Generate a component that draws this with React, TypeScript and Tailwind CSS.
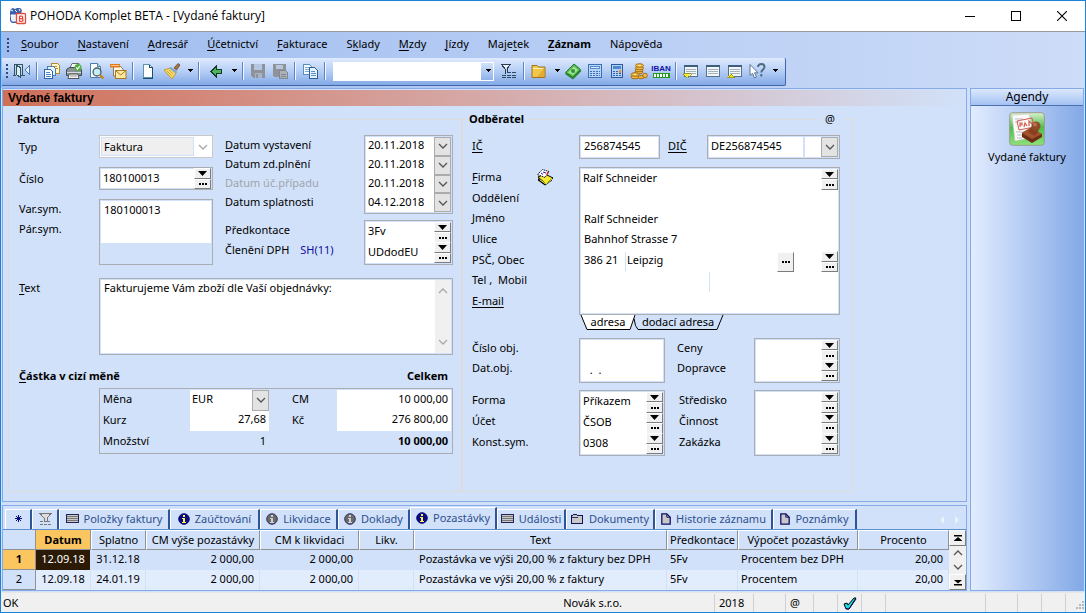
import React, { useState } from "react";

type IconProps = { children: React.ReactNode; crisp?: boolean };

function Ico({ children, crisp }: IconProps) {
  return (
    <svg width="18" height="18" viewBox="0 0 18 18" fill="none" shapeRendering={crisp ? "crispEdges" : "auto"} aria-hidden="true">
      {children}
    </svg>
  );
}

const DoorIcon = () => (
  <Ico crisp>
    <path d="M1 2.500H10M1.500 2v11M9.500 2v11M0 13.500h3M8 13.500h4" stroke="#33555f" />
    <path d="M3.500 3.500l4 2v10l-4-3z" fill="#d9f0f4" stroke="#33555f" />
    <path d="M12 8l4-4v8z" fill="#e4f2ff" />
    <path d="M12 8l4-4v8z" stroke="#4a78b5" />
  </Ico>
);
const CopiesIcon = () => (
  <Ico crisp>
    <path d="M8.500 1.500h6l2 2v8h-8z" fill="#fff8c8" stroke="#b58a2a" />
    <path d="M11 4h3M11 6h4" stroke="#c58f28" />
    <path d="M4.500 4.500h6l2 2v7h-8z" fill="#e4f3ff" stroke="#4a7fb8" />
    <path d="M1.500 7.500h6l2 2v7h-8z" fill="#fff" stroke="#2e68a8" />
    <path d="M3 10h4M3 12h5M3 14h5" stroke="#4b86c4" />
  </Ico>
);
const PrinterIcon = () => (
  <Ico>
    <path d="M5 6l2-4.500h7L12.500 6z" fill="#fff" stroke="#6c6c6c" />
    <path d="M1.500 7.500l3-2h10l2 2v6h-15z" fill="#8b9298" stroke="#43494e" />
    <path d="M2 10.500h14" stroke="#d8dde2" />
    <path d="M4 12h9l1 4.500H3z" fill="#f4f4f4" stroke="#555" />
    <path d="M5 14h7" stroke="#999" />
    <circle cx="13" cy="5.500" r="3.500" fill="#4fae3c" />
    <path d="M11.300 5.500l1.300 1.500 2.300-3" stroke="#fff" strokeWidth="1.200" />
  </Ico>
);
const PreviewIcon = () => (
  <Ico>
    <path d="M3.500 1.500h7l3 3v11h-10z" fill="#fff" stroke="#4a7fa8" />
    <path d="M10.500 1.500v3h3" fill="#bfe3ee" stroke="#4a7fa8" />
    <circle cx="10" cy="10" r="4" fill="#c4eef6" stroke="#4b5b66" strokeWidth="1.300" />
    <path d="M13 13l3.500 3.500" stroke="#c98520" strokeWidth="2.400" />
  </Ico>
);
const MailIcon = () => (
  <Ico>
    <path d="M4.500 3.500h6l3.500 3.500v7h-9.500z" fill="#fff8e8" stroke="#8a7a5a" />
    <path d="M1 2h10v3.500H1z" fill="#e07a20" />
    <path d="M2 3.500h8" stroke="#ffc27c" />
    <rect x="6.500" y="8.500" width="10.500" height="8" fill="#fbe9a0" stroke="#a87824" />
    <path d="M6.500 8.500l5.250 4.500L17 8.500" stroke="#a87824" />
  </Ico>
);
const PageIcon = () => (
  <Ico crisp>
    <path d="M4.500 2.500h6l3 3v10h-9z" fill="#fff" stroke="#5c93ae" />
    <path d="M10.500 2.500v3h3M13.500 6v10M4 16h10" stroke="#1c4f6e" />
  </Ico>
);
const BrushIcon = () => (
  <Ico>
    <path d="M11 6l4-4.500 2 1.500-3.500 5z" fill="#a8764c" stroke="#6b4526" strokeWidth=".8" />
    <path d="M1 8l7-2 5.500 4-4.500 7z" fill="#f7dc6a" stroke="#c19a2b" />
    <path d="M8 5l6 4.500-1.500 2-6.500-5.500z" fill="#87a7c8" />
    <path d="M4 9l5 5M6 8l4 4" stroke="#d5a832" />
  </Ico>
);
const BackIcon = () => (
  <Ico crisp>
    <path d="M4 9.500l5-5v3h5v4H9v3z" fill="#4fb35c" stroke="#123f2a" />
  </Ico>
);
const SaveIcon = () => (
  <Ico crisp>
    <path d="M2 2h14v14H4l-2-2z" fill="#8f9398" />
    <path d="M5 2h8v6H5z" fill="#b5c6e2" />
    <path d="M6 11h7v5H6z" fill="#a7b4c8" />
    <path d="M7 12h2v4H7z" fill="#8f9398" />
  </Ico>
);
const SaveAllIcon = () => (
  <Ico crisp>
    <path d="M2 2h13v13H3l-1-1z" fill="#8f9398" />
    <path d="M5 3h7v4H5z" fill="#b5c6e2" />
    <path d="M8.500 8.500h6l2 2v6h-8z" fill="#a9b1bb" stroke="#84888d" />
    <path d="M10 12h5M10 14h5" stroke="#84888d" />
  </Ico>
);
const DuplicateIcon = () => (
  <Ico crisp>
    <path d="M2.500 2.500h6l2 2v8h-8z" fill="#f5faff" stroke="#5790b8" />
    <path d="M4 5h4M4 7h5M4 9h5" stroke="#7aa8cf" />
    <path d="M8.500 5.500h5l3 3v8h-8z" fill="#e8f3ff" stroke="#2c5f94" />
    <path d="M10 9h4M10 11h5M10 13h5" stroke="#5a8fc8" />
  </Ico>
);
const FilterIcon = () => (
  <Ico crisp>
    <path d="M1 2.500h10M2 3l3 4v5M10 3L7 7v4" stroke="#2b3d4c" />
    <path d="M3 3h6L6 7z" fill="#eef" />
    <path d="M7 10.500h4M12 10.500h4M2 13.500h4M7 13.500h4M12 13.500h4M7 15.500h4M2 15.500h4M12 15.500h4" stroke="#2b4a60" />
  </Ico>
);
const FolderIcon = () => (
  <Ico>
    <path d="M2 3.500h5l1.500 1.500H15v10.500H2z" fill="#f2c64a" stroke="#a0701c" />
    <path d="M14.500 5.500L7 15h7.500z" fill="#d89a22" opacity=".6" />
    <path d="M3 6.500h10" stroke="#fff1b2" />
  </Ico>
);
const CashIcon = () => (
  <Ico>
    <path d="M1 12l9-9 7.500 6L9 17.500z" fill="#2c8230" />
    <path d="M1.500 10.500L10 2l6.500 5.500L9 15.500z" fill="#56bb50" stroke="#217a28" />
    <path d="M4 10.500L10 4.500l4 3.500L9 13z" fill="#a5e39b" />
    <circle cx="9" cy="9" r="2" fill="#2f9334" />
  </Ico>
);
const CalcWideIcon = () => (
  <Ico crisp>
    <rect x="2.500" y="2.500" width="13" height="13" fill="#b8d5f8" stroke="#3e6fb0" />
    <rect x="4.500" y="4.500" width="9" height="2" fill="#d4e6fc" stroke="#5a8bd0" />
    <path d="M4 9.500h10M4 11.500h10M4 13.500h10" stroke="#3970bc" strokeDasharray="2 1" />
  </Ico>
);
const CalcIcon = () => (
  <Ico crisp>
    <rect x="3.500" y="2.500" width="11" height="13" fill="#b5d2f6" stroke="#2c5a9a" />
    <path d="M5 4h8v3H5z" fill="#4e87d2" />
    <path d="M5 9.500h5M5 11.500h8M5 13.500h8" stroke="#2c65b0" strokeDasharray="2 1" />
    <path d="M11 8h2v3h-2z" fill="#f08a24" />
  </Ico>
);
const CoinsIcon = () => (
  <Ico>
    <g fill="#f4bb3d" stroke="#9c6412" strokeWidth=".9">
      <ellipse cx="9" cy="10" rx="4" ry="1.800" />
      <ellipse cx="9" cy="8" rx="4" ry="1.800" />
      <ellipse cx="9.500" cy="6" rx="4" ry="1.800" />
      <ellipse cx="9.500" cy="3.500" rx="4" ry="1.800" />
      <ellipse cx="5" cy="15" rx="4" ry="1.800" />
      <ellipse cx="5" cy="12.500" rx="4" ry="1.800" />
      <ellipse cx="11" cy="15.200" rx="3" ry="1.600" />
      <circle cx="15" cy="13.500" r="2.300" />
    </g>
    <path d="M8 3.500h3M4 12.500h2" stroke="#fff0a8" />
  </Ico>
);
const GridPlaceIcon = ({ arrow }: { arrow?: "down" | "up" }) => (
  <Ico crisp>
    <rect x="2.500" y="3.500" width="13" height="11" fill="#f3f6f8" stroke="#54728c" />
    <path d="M2 4h14" stroke="#3d5f7c" strokeWidth="2" />
    <path d="M4 7.500h10M4 9.500h10M4 11.500h10" stroke="#a5b1ba" />
    {arrow === "down" && <path d="M1 11.500h8l-4 4z" fill="#f6f02c" stroke="#8d8a16" strokeWidth=".8" />}
    {arrow === "up" && <path d="M1 15.500h8l-4-4z" fill="#f6f02c" stroke="#8d8a16" strokeWidth=".8" />}
  </Ico>
);
const HelpIcon = () => (
  <Ico>
    <path d="M2 2.500v11l2.500-2.200L6.500 16l2-1-2-4.200H10z" fill="#fff" stroke="#5a7890" />
    <path d="M10 5c0-4 6.500-4 6.500 0 0 2.500-3.200 2.500-3.200 5.500M13.300 12v2.500" stroke="#4a6a80" strokeWidth="1.900" />
  </Ico>
);

const Drop = () => (
  <svg width="7" height="4" viewBox="0 0 7 4" shapeRendering="crispEdges" aria-hidden="true">
    <path d="M1 0h6L4 3z" fill="#000" />
  </svg>
);
const Chevron = ({ up, tone = "dark" }: { up?: boolean; tone?: "dark" | "light" }) => (
  <svg width="10" height="6" viewBox="0 0 10 6" fill="none" className={up ? "rotate-180" : ""} aria-hidden="true">
    <path d="M1 1l4 4 4-4" stroke={tone === "dark" ? "#555" : "#a8a8a8"} strokeWidth="1.300" />
  </svg>
);

/** Renders a caption; the character after "&" is underlined as the access key. */
function Cap({ t }: { t: string }) {
  const i = t.indexOf("&");
  if (i < 0) return <>{t}</>;
  return (
    <span className="whitespace-pre">
      {t.slice(0, i)}
      <u className="underline-offset-2">{t[i + 1]}</u>
      {t.slice(i + 2)}
    </span>
  );
}

function Sep() {
  return (
    <div className="flex w-2 shrink-0 justify-center">
      <div className="h-[18px] w-[2px] border-l border-[#5f84c4] bg-[#f2f7ff]" />
    </div>
  );
}

function Tool({ name, children }: { name: string; children: React.ReactNode }) {
  return (
    <button aria-label={name} title={name} className="flex h-[22px] w-[22px] shrink-0 items-center justify-center">
      {children}
    </button>
  );
}

function ToolDrop({ name }: { name: string }) {
  return (
    <button aria-label={name} className="flex h-[22px] w-3 shrink-0 items-center justify-center">
      <Drop />
    </button>
  );
}

function Grip() {
  return (
    <div className="flex w-[3px] shrink-0 flex-col justify-center gap-[2px]">
      {[0, 1, 2, 3].map((i) => (
        <span key={i} className="h-[2px] w-[2px] bg-[#2c4a80]" />
      ))}
    </div>
  );
}

const bevel =
  "flex items-center justify-center border border-t-white border-l-white border-r-[#7c7c7c] border-b-[#7c7c7c] bg-[#f0f0f0] min-h-0";

function Lookup({ name }: { name: string }) {
  return (
    <div className="flex h-[21px] w-[17px] shrink-0 flex-col">
      <button aria-label={`${name}: seznam`} className={`${bevel} flex-1`}>
        <svg width="9" height="5" viewBox="0 0 9 5" aria-hidden="true">
          <path d="M0 0h9L4.500 5z" fill="#000" />
        </svg>
      </button>
      <button aria-label={`${name}: výběr`} className={`${bevel} flex-1`}>
        <Dots />
      </button>
    </div>
  );
}

function Dots() {
  return (
    <svg width="8" height="2" viewBox="0 0 8 2" shapeRendering="crispEdges" aria-hidden="true">
      <path d="M0 0h2v2H0zM3 0h2v2H3zM6 0h2v2H6z" fill="#000" />
    </svg>
  );
}

function ChevronButton({ name }: { name: string }) {
  return (
    <button aria-label={name} className="flex w-[17px] shrink-0 items-center justify-center self-stretch border border-[#acacac] bg-[#e3e3e3]">
      <Chevron />
    </button>
  );
}

const box = "flex shrink-0 border border-[#abadb3] bg-[#d1e1f9] p-px";
const input = "w-0 min-w-0 flex-1 bg-transparent pb-[2px] outline-none";
const line = "min-w-0 pb-[3px] outline-none";
const amount = "w-full min-w-0 bg-white pr-[3px] pb-[3px] text-right outline-none";

function LookupRow({ id, name, value }: { id: string; name: string; value: string }) {
  return (
    <div className="flex min-h-0 min-w-0 flex-1 items-center bg-white pl-[2px]">
      <input id={id} defaultValue={value} className={input} />
      <Lookup name={name} />
    </div>
  );
}

const dates = [
  { id: "d1", label: "&Datum vystavení", value: "20.11.2018" },
  { id: "d2", label: "Datum zd.plnění", value: "20.11.2018" },
  { id: "d3", label: "Datum úč.případu", value: "20.11.2018", dim: true },
  { id: "d4", label: "Datum splatnosti", value: "04.12.2018" },
];

function Faktura() {
  return (
    <fieldset className="w-[454px] min-w-0 shrink-0 border border-[#dcdcdc] px-2 pl-[10px]">
      <legend className="-ml-[6px] px-1 leading-4 font-bold">Faktura</legend>
      <div className="flex pt-2">
        <div className="flex w-[194px] flex-col gap-[9px]">
          <div className="flex h-[23px] items-center">
            <label htmlFor="typ" className="w-20 shrink-0">Typ</label>
            <div className="relative flex h-full flex-1 border border-[#c8c8cc] bg-white p-px">
              <select id="typ" disabled className="mr-[17px] flex-1 appearance-none border border-[#d1e1f9] bg-[#efefef] pl-[2px] opacity-100">
                <option>Faktura</option>
              </select>
              <span className="pointer-events-none absolute top-2 right-1"><Chevron tone="light" /></span>
            </div>
          </div>
          <div className="flex h-[23px] items-center">
            <label htmlFor="cislo" className="w-20 shrink-0">Číslo</label>
            <div className={`${box} h-full w-[114px]`}>
              <LookupRow id="cislo" name="Číslo" value="180100013" />
            </div>
          </div>
          <div className="flex h-[66px]">
            <div className="flex w-20 shrink-0 flex-col">
              <label htmlFor="varsym" className="h-5 leading-5">Var.sym.</label>
              <label htmlFor="parsym" className="h-5 leading-5">Pár.sym.</label>
            </div>
            <div className={`${box} w-[114px] flex-col`}>
              <div className="flex h-[42px] flex-col bg-white pl-[3px]">
                <input id="varsym" defaultValue="180100013" className={`${line} h-5 w-full`} />
                <input id="parsym" className={`${line} h-[22px] w-full`} />
              </div>
            </div>
          </div>
        </div>
        <div className="ml-3 flex flex-1 flex-col gap-[6px]">
          <div className="flex h-[79px]">
            <div className="flex flex-1 flex-col">
              {dates.map((d) => (
                <label key={d.id} htmlFor={d.id} className={`h-[19px] leading-[19px] ${d.dim ? "text-[#a0a4ac]" : ""}`}>
                  <Cap t={d.label} />
                </label>
              ))}
            </div>
            <div className={`${box} w-[89px] flex-col`}>
              {dates.map((d) => (
                <div key={d.id} className="flex min-h-0 flex-1 items-center bg-white pl-[2px]">
                  <input id={d.id} defaultValue={d.value} className={input} />
                  <ChevronButton name={`${d.value} kalendář`} />
                </div>
              ))}
            </div>
          </div>
          <div className="flex h-[45px]">
            <div className="flex flex-1 flex-col">
              <label htmlFor="predk" className="h-5 leading-5">Předkontace</label>
              <label htmlFor="clen" className="h-5 leading-5">Členění DPH <span className="ml-2 text-[#1010a0]">SH(11)</span></label>
            </div>
            <div className={`${box} w-[89px] flex-col`}>
              <LookupRow id="predk" name="Předkontace" value="3Fv" />
              <LookupRow id="clen" name="Členění DPH" value="UDdodEU" />
            </div>
          </div>
        </div>
      </div>
      <div className="mt-[13px] flex h-[77px]">
        <label htmlFor="text" className="w-20 shrink-0 leading-5"><Cap t="&Text" /></label>
        <div className={`${box} w-[354px]`}>
          <textarea id="text" defaultValue="Fakturujeme Vám zboží dle Vaší objednávky:" className="flex-1 resize-none overflow-hidden bg-white pl-[3px] leading-4 outline-none" />
          <div className="flex w-4 flex-col items-center justify-between bg-[#f0f0f0] py-2">
            <Chevron up tone="light" />
            <Chevron tone="light" />
          </div>
        </div>
      </div>
      <div className="mt-[13px] flex justify-between pr-[5px] leading-4 font-bold">
        <span><Cap t="&Částka v cizí měně" /></span>
        <span>Celkem</span>
      </div>
      <div className="mt-1 ml-20 grid h-[66px] grid-cols-[89px_79px_68px_1fr] grid-rows-3 items-stretch border border-[#abadb3] p-px">
        <label htmlFor="mena" className="self-center pb-[2px] pl-[2px]">Měna</label>
        <div className="relative flex bg-white">
          <select id="mena" className="flex-1 appearance-none bg-white pb-[2px] pl-[2px] outline-none"><option>EUR</option></select>
          <span className="pointer-events-none absolute top-0 right-0 flex h-full w-[17px] items-center justify-center border border-[#acacac] bg-[#e3e3e3]"><Chevron /></span>
        </div>
        <label htmlFor="cm" className="self-center pb-[2px] pl-[23px]">CM</label>
        <input id="cm" defaultValue="10 000,00" className={amount} />
        <label htmlFor="kurz" className="self-center pb-[2px] pl-[2px]">Kurz</label>
        <input id="kurz" defaultValue="27,68" className={amount} />
        <label htmlFor="kc" className="self-center pb-[2px] pl-[23px]">Kč</label>
        <input id="kc" defaultValue="276 800,00" className={amount} />
        <span className="self-center pb-[2px] pl-[2px]">Množství</span>
        <span className="self-center pr-[3px] pb-[2px] text-right">1</span>
        <span />
        <span className="self-center pr-[3px] pb-[2px] text-right font-bold">10 000,00</span>
      </div>
    </fieldset>
  );
}

function AddressTab({ label, active, onClick, wide }: { label: string; active: boolean; onClick: () => void; wide?: boolean }) {
  return (
    <button onClick={onClick} className={`relative flex h-[15px] justify-center ${wide ? "-ml-1 w-[92px]" : "w-[56px]"}`}>
      <svg className="absolute inset-0 h-full w-full" viewBox={wide ? "0 0 92 15" : "0 0 56 15"} fill={active ? "#fff" : "#d1e1f9"} aria-hidden="true">
        <path d={wide ? "M2 3.500L3.500 10.500 6 14.500H85L91 0" : "M1 0L7 14.500H50L55 0"} stroke="#000" />
      </svg>
      <span className="relative leading-[13px]">{label}</span>
    </button>
  );
}

function Odberatel() {
  const [tab, setTab] = useState(0);
  return (
    <fieldset className="relative w-[391px] min-w-0 shrink-0 border border-[#dcdcdc] pr-3 pl-[9px]">
      <legend className="-ml-[6px] px-[3px] leading-4 font-bold">Odběratel</legend>
      <button aria-label="E-mail odběratele" className="absolute -top-4 right-[9px] bg-[#d1e1f9] px-2 leading-4">@</button>
      <div className="flex h-8 items-center pt-2">
        <a href="#ic" className="w-[107px] pb-[2px] underline underline-offset-2">IČ</a>
        <div className={`${box} h-6 w-[81px]`}>
          <input aria-label="IČ" defaultValue="256874545" className={`${line} w-full bg-white pl-[3px]`} />
        </div>
        <a href="#dic" className="ml-2 w-[39px] pb-[2px] underline underline-offset-2">DIČ</a>
        <div className={`${box} h-6 w-[133px]`}>
          <input aria-label="DIČ" defaultValue="DE256874545" className={`${line} mr-[2px] w-[94px] bg-white pl-[2px]`} />
          <div className="flex-1 bg-white" />
          <ChevronButton name="DIČ seznam" />
        </div>
      </div>
      <div className="mt-2 flex">
        <div className="grid h-36 w-[107px] grid-rows-7 items-center">
          <div className="flex items-center justify-between pr-[25px]">
            <label htmlFor="firma"><Cap t="&Firma" /></label>
            <svg width="18" height="18" viewBox="0 0 18 18" aria-hidden="true">
              <path d="M2 10l7 6 7-6v2.500l-7 5-7-5z" fill="#000" />
              <path d="M2 9l7-3 8 4-7 6z" fill="#f4ea30" stroke="#000" />
              <path d="M4 12l6 4 6-5" fill="none" stroke="#f4ea30" />
              <path d="M1.500 6.500l5-5 6.500 2-4 6z" fill="#fff" stroke="#222" strokeDasharray="1.500 .6" />
              <path d="M5 5l2 1.500M7 4l3 1" stroke="#1818c8" />
              <path d="M12 4l-1 2.500" stroke="#e02020" strokeWidth="1.500" />
            </svg>
          </div>
          <label htmlFor="odd">Oddělení</label>
          <label htmlFor="jmeno">Jméno</label>
          <label htmlFor="ulice">Ulice</label>
          <label htmlFor="psc">PSČ, Obec</label>
          <label htmlFor="tel">Tel , &nbsp;Mobil</label>
          <a href="#email" className="underline underline-offset-2">E-mail</a>
        </div>
        <div className={`${box} h-[148px] w-[261px]`}>
          <div className="grid min-w-0 flex-1 grid-cols-1 grid-rows-7 bg-white">
            <div className="flex items-center pl-[2px]">
              <input id="firma" defaultValue="Ralf Schneider" className={input} />
              <Lookup name="Firma" />
            </div>
            <input id="odd" className={`${line} pl-[3px]`} />
            <input id="jmeno" defaultValue="Ralf Schneider" className={`${line} pl-[3px]`} />
            <input id="ulice" defaultValue="Bahnhof Strasse 7" className={`${line} pl-[3px]`} />
            <div className="flex items-center">
              <input id="psc" defaultValue="386 21" className={`${line} w-[45px] border-r border-[#d1e1f9] pl-[3px]`} />
              <input aria-label="Obec" defaultValue="Leipzig" className={`${line} flex-1 pl-px`} />
              <button aria-label="Vybrat obec" className={`${bevel} mr-[27px] h-5 w-[17px] shrink-0`}><Dots /></button>
              <Lookup name="Obec" />
            </div>
            <div className="flex">
              <input id="tel" className={`${line} w-[129px] border-r border-[#d1e1f9]`} />
              <input aria-label="Mobil" className={`${line} flex-1`} />
            </div>
            <input aria-label="E-mail" className={line} />
          </div>
        </div>
      </div>
      <div className="ml-[108px] flex">
        <AddressTab label="adresa" active={tab === 0} onClick={() => setTab(0)} />
        <AddressTab label="dodací adresa" active={tab === 1} onClick={() => setTab(1)} wide />
      </div>
      <div className="mt-2 flex h-[45px]">
        <div className="flex w-[107px] flex-col">
          <label htmlFor="cobj" className="h-5 leading-5">Číslo obj.</label>
          <label htmlFor="dobj" className="h-5 leading-5">Dat.obj.</label>
        </div>
        <div className={`${box} w-[86px] flex-col`}>
          <input id="cobj" className="h-5 w-full bg-white outline-none" />
          <input id="dobj" defaultValue="  .  ." className={`${line} h-[21px] w-full bg-white pl-[3px]`} />
        </div>
        <div className="ml-3 flex w-[77px] flex-col">
          <label htmlFor="ceny" className="h-5 leading-5">Ceny</label>
          <label htmlFor="dopr" className="h-5 leading-5">Dopravce</label>
        </div>
        <div className={`${box} w-[86px] flex-col`}>
          <LookupRow id="ceny" name="Ceny" value="" />
          <LookupRow id="dopr" name="Dopravce" value="" />
        </div>
      </div>
      <div className="mt-[7px] flex h-[66px]">
        <div className="grid h-[62px] w-[107px] grid-rows-3 items-center">
          <label htmlFor="forma">Forma</label>
          <label htmlFor="ucet">Účet</label>
          <label htmlFor="ks">Konst.sym.</label>
        </div>
        <div className={`${box} w-[86px] flex-col`}>
          <LookupRow id="forma" name="Forma" value="Příkazem" />
          <LookupRow id="ucet" name="Účet" value="ČSOB" />
          <LookupRow id="ks" name="Konst.sym." value="0308" />
        </div>
        <div className="ml-[14px] grid h-[62px] w-[75px] grid-rows-3 items-center">
          <label htmlFor="stred">Středisko</label>
          <label htmlFor="cinn">Činnost</label>
          <label htmlFor="zak">Zakázka</label>
        </div>
        <div className={`${box} w-[86px] flex-col`}>
          <LookupRow id="stred" name="Středisko" value="" />
          <LookupRow id="cinn" name="Činnost" value="" />
          <LookupRow id="zak" name="Zakázka" value="" />
        </div>
      </div>
    </fieldset>
  );
}

const Lines = () => (
  <svg width="13" height="11" viewBox="0 0 13 11" shapeRendering="crispEdges" aria-hidden="true">
    <path d="M.5 1.500h12v8H.5z" fill="#c8c8c8" stroke="#222255" />
    <path d="M1 3.500h11M1 5.500h11M1 7.500h11" stroke="#777" />
  </svg>
);
const Info = ({ on }: { on?: boolean }) => (
  <svg width="12" height="12" viewBox="0 0 12 12" aria-hidden="true">
    <circle cx="6" cy="6" r="5.300" fill={on ? "#0a0a82" : "#6a6a6a"} stroke={on ? "#0a0a82" : "#33336a"} />
    <path d="M5 2h2v2H5zM4 5h3v4h1v1H4V9h1V6H4z" fill={on ? "#fff34a" : "#d0d0d0"} />
  </svg>
);
const Dir = () => (
  <svg width="13" height="12" viewBox="0 0 13 12" shapeRendering="crispEdges" aria-hidden="true">
    <path d="M.5 10.500v-8h1l1-1h3l1 1h5v8z" fill="#c8c8c8" stroke="#111155" />
    <path d="M1 4.500h6" stroke="#333366" />
  </svg>
);
const Doc = () => (
  <svg width="10" height="12" viewBox="0 0 10 12" aria-hidden="true">
    <path d="M.8.8h5l3.400 3.400v7H.8z" fill="#c8c8c8" stroke="#11116a" strokeWidth="1.300" />
    <path d="M5.800.8v3.400h3.400" fill="none" stroke="#11116a" />
  </svg>
);

const tabs: { label: string; icon: React.ReactNode; w: string; name?: string }[] = [
  { label: "", name: "Vše", w: "w-[27px]", icon: <svg width="9" height="9" viewBox="0 0 9 9" aria-hidden="true"><path d="M4.500 1v7M1 4.500h7M2 2l5 5M7 2L2 7" stroke="#0a0a82" /></svg> },
  { label: "", name: "Filtr", w: "w-[27px]", icon: <svg width="13" height="13" viewBox="0 0 13 13" shapeRendering="crispEdges" fill="none" aria-hidden="true"><path d="M1 1.500h11L8 6v3H5V6z" fill="#ddd" stroke="#777" /><path d="M1 9.500h4M8 9.500h4M1 12h11" stroke="#777" strokeDasharray="3 1" /></svg> },
  { label: "Položky faktury", w: "w-[111px]", icon: <Lines /> },
  { label: "Zaúčtování", w: "w-[90px]", icon: <Info on /> },
  { label: "Likvidace", w: "w-[78px]", icon: <Info /> },
  { label: "Doklady", w: "w-[72px]", icon: <Info /> },
  { label: "Pozastávky", w: "w-[87px]", icon: <Info on /> },
  { label: "Události", w: "w-[69px]", icon: <Lines /> },
  { label: "Dokumenty", w: "w-[89px]", icon: <Dir /> },
  { label: "Historie záznamu", w: "w-[118px]", icon: <Doc /> },
  { label: "Poznámky", w: "w-[84px]", icon: <Doc /> },
];

const cols: { t: string; w: string }[] = [
  { t: "Datum", w: "w-[55px]" },
  { t: "Splatno", w: "w-[55px]" },
  { t: "CM výše pozastávky", w: "w-[114px]" },
  { t: "CM k likvidaci", w: "w-[99px]" },
  { t: "Likv.", w: "w-[55px]" },
  { t: "Text", w: "" },
  { t: "Předkontace", w: "w-[71px]" },
  { t: "Výpočet pozastávky", w: "w-[120px]" },
  { t: "Procento", w: "w-[91px]" },
];
const rows = [
  ["12.09.18", "31.12.18", "2 000,00", "2 000,00", "", "Pozastávka ve výši 20,00 % z faktury bez DPH", "5Fv", "Procentem bez DPH", "20,00"],
  ["12.09.18", "24.01.19", "2 000,00", "2 000,00", "", "Pozastávka ve výši 20,00 % z faktury", "5Fv", "Procentem", "20,00"],
];
const alignRight = [2, 3, 8];

function Detail() {
  const [active, setActive] = useState(6);
  return (
    <section className="mt-[3px] border border-[#86aae8] bg-[#d1e1f9]">
      <div className="flex h-6 items-end border-b border-[#5b8fcf] pl-[2px]">
        {tabs.map((t, i) => (
          <button
            key={i}
            aria-label={t.name}
            onClick={() => setActive(i)}
            className={`flex shrink-0 items-center justify-center gap-[5px] border-t border-r-2 border-l border-t-white border-r-[#2e5597] border-l-white pb-[2px] text-[#2f4f8f] ${t.w} ${i === active ? "h-[22px]" : "h-5"}`}
          >
            {t.icon}
            {t.label}
          </button>
        ))}
        <div className="flex-1" />
        <svg width="21" height="18" viewBox="0 0 21 18" className="mr-[6px]" aria-hidden="true">
          <path d="M5 5v8L1 9zM16 5v8l4-4z" fill="#eaf1fc" />
        </svg>
      </div>
      <div className="flex h-[60px]">
        <div className="min-w-0 flex-1">
          <table className="w-full table-fixed border-separate border-spacing-0">
            <thead>
              <tr className="h-5">
                <th aria-label="Řádek" className="w-[33px] border-r border-b border-[#8e9196] p-0" />
                {cols.map((c, i) => (
                  <th key={c.t} className={`border-r border-b border-[#8e9196] p-0 whitespace-nowrap ${c.w} ${i === 0 ? "bg-[#fbc55f] font-bold" : "border-t border-l border-t-white border-l-white font-normal"}`}>
                    {c.t}
                  </th>
                ))}
              </tr>
            </thead>
            <tbody>
              {rows.map((r, n) => (
                <tr key={n} className={`h-5 ${n ? "bg-[#e1ecfd]" : "bg-[#d1e1f9]"}`}>
                  <th className={`border-r border-b border-[#8e9196] p-0 pb-px ${n ? "bg-[#d1e1f9] font-normal" : "bg-[#fbc55f] font-bold"}`}>{n + 1}</th>
                  {r.map((v, i) => (
                    <td
                      key={i}
                      className={`overflow-hidden border-r border-[#d1e1f9] p-0 pb-[2px] whitespace-nowrap ${alignRight.includes(i) ? "pr-[5px] text-right" : i < 2 ? "text-center" : i === 5 ? "pl-[5px]" : "pl-[3px]"} ${n === 0 && i === 0 ? "bg-[#2b1a05] text-white" : ""}`}
                    >
                      {v}
                    </td>
                  ))}
                </tr>
              ))}
            </tbody>
          </table>
        </div>
        <div className="flex w-[17px] shrink-0 flex-col bg-[#f0f0f0]">
          <button aria-label="První" className={`${bevel} h-4 shrink-0`}>
            <svg width="8" height="7" viewBox="0 0 8 7" aria-hidden="true"><path d="M0 0h8v1.500H0zM4 2l4 3.500H0zM0 5.500h8V6H0z" /></svg>
          </button>
          <button aria-label="Nahoru" className="flex flex-1 items-center justify-center"><Chevron up /></button>
          <button aria-label="Dolů" className="flex flex-1 items-center justify-center"><Chevron /></button>
          <button aria-label="Poslední" className={`${bevel} h-4 shrink-0`}>
            <svg width="8" height="7" viewBox="0 0 8 7" aria-hidden="true"><path d="M0 5h8v1.500H0zM4 4.500L8 1H0z" /></svg>
          </button>
        </div>
      </div>
    </section>
  );
}

const menu = ["&Soubor", "&Nastavení", "&Adresář", "&Účetnictví", "&Fakturace", "S&klady", "&Mzdy", "&Jízdy", "Maje&tek", "&Záznam", "Náp&ověda"];

function StatusCell({ w, children }: { w: string; children?: React.ReactNode }) {
  return <div className={`flex h-full shrink-0 items-center border-l border-[#d0d0d0] ${w}`}>{children}</div>;
}

export default function App() {
  return (
    <div className="flex min-h-screen flex-col border border-[#1883d7] bg-[#d1e1f9] font-['Noto_Sans','Open_Sans',sans-serif] text-[11px] leading-4 text-black">
      <header className="flex h-[31px] items-center border-b border-[#999] bg-white pl-2">
        <svg width="18" height="18" viewBox="0 0 18 18" aria-hidden="true">
          <path d="M1 5l1-3 2-1 2 1 2-1h3l2 2-1 4-2 1v7l-1 1H3l-2-2z" fill="#3c5fae" />
          <path d="M2 3l2 1M6 3l2 2M10 2l1 2M2 8h6v6H3z" stroke="#fff" fill="#e9effb" />
          <rect x="7.500" y="6.500" width="9" height="10" rx="1" fill="#fff" stroke="#e04a3c" strokeWidth="1.300" />
          <path d="M10.500 9v5.500M10.500 9.200h2q1.200 0 1.200 1.200t-1.200 1.300h-2h2.300q1.300.1 1.300 1.400t-1.300 1.300h-2.300" fill="none" stroke="#e04a3c" strokeWidth="1.300" />
        </svg>
        <h1 className="ml-[3px] flex-1 font-['Open_Sans','Noto_Sans',sans-serif] text-[12px]">POHODA Komplet BETA - [Vydané faktury]</h1>
        <button aria-label="Minimalizovat" className="flex h-full w-[46px] items-center justify-center">
          <svg width="10" height="10" viewBox="0 0 10 10" shapeRendering="crispEdges"><path d="M0 5.500h10" stroke="#000" /></svg>
        </button>
        <button aria-label="Maximalizovat" className="flex h-full w-[46px] items-center justify-center">
          <svg width="10" height="10" viewBox="0 0 10 10" shapeRendering="crispEdges" fill="none"><path d="M.5.5h9v9h-9z" stroke="#000" /></svg>
        </button>
        <button aria-label="Zavřít" className="flex h-full w-[46px] items-center justify-center">
          <svg width="10" height="10" viewBox="0 0 10 10" fill="none"><path d="M0 0l10 10M10 0L0 10" stroke="#000" strokeWidth="1.100" /></svg>
        </button>
      </header>
      <div className="bg-linear-to-r from-[#9ebcef] to-[#cddcf8]">
        <nav className="flex h-[26px] items-center pl-[6px]">
          <Grip />
          <ul className="ml-[2px] flex gap-px pb-[2px]">
            {menu.map((m) => (
              <li key={m} className={m === "&Záznam" ? "font-bold" : ""}>
                <button className="px-[9px]"><Cap t={m} /></button>
              </li>
            ))}
          </ul>
        </nav>
        <div className="mb-[2px] ml-px flex h-7 w-[784px] items-center rounded-r-xs border-r border-b border-[#3e66a8] bg-linear-to-b from-[#dfeafd] via-[#b4cdf5] to-[#83a9e6] pb-px pl-1">
          <Grip />
          <div className="w-[2px]" />
          <Tool name="Konec"><DoorIcon /></Tool>
          <Sep />
          <Tool name="Agendy"><CopiesIcon /></Tool>
          <Tool name="Tisk"><PrinterIcon /></Tool>
          <Tool name="Náhled"><PreviewIcon /></Tool>
          <Tool name="Odeslat"><MailIcon /></Tool>
          <Sep />
          <Tool name="Nový"><PageIcon /></Tool>
          <div className="w-[2px]" />
          <Tool name="Průvodce"><BrushIcon /></Tool>
          <ToolDrop name="Průvodce nabídka" />
          <Sep />
          <div className="w-[2px]" />
          <Tool name="Zpět"><BackIcon /></Tool>
          <ToolDrop name="Zpět nabídka" />
          <Sep />
          <Tool name="Uložit"><SaveIcon /></Tool>
          <Tool name="Uložit kopii"><SaveAllIcon /></Tool>
          <Sep />
          <Tool name="Kopírovat"><DuplicateIcon /></Tool>
          <Sep />
          <div className="ml-1 flex h-[19px] w-[161px] border border-white bg-white">
            <input aria-label="Hledat" className="min-w-0 flex-1 outline-none" />
            <button aria-label="Historie hledání" className="flex w-3 items-center justify-center bg-linear-to-b from-[#d3e2fa] to-[#8fb2ea]"><Drop /></button>
          </div>
          <div className="w-1" />
          <Tool name="Filtr"><FilterIcon /></Tool>
          <Sep />
          <Tool name="Složka"><FolderIcon /></Tool>
          <ToolDrop name="Složka nabídka" />
          <Tool name="Hotovost"><CashIcon /></Tool>
          <Tool name="Kalkulačka"><CalcWideIcon /></Tool>
          <Tool name="Výpočet"><CalcIcon /></Tool>
          <Tool name="Měny"><CoinsIcon /></Tool>
          <button aria-label="IBAN" className="flex w-[22px] shrink-0 flex-col items-center">
            <span className="font-['Liberation_Sans_Narrow','Liberation_Sans',sans-serif] text-[8px] leading-[9px] font-bold text-[#1414a8]">IBAN</span>
            <svg width="17" height="5" viewBox="0 0 17 5" shapeRendering="crispEdges" aria-hidden="true">
              <path d="M0 0h17v5H0z" fill="#1e9a1e" />
              <path d="M1 2.500h15" stroke="#fff" strokeWidth="3" strokeDasharray="2 1" />
            </svg>
          </button>
          <Sep />
          <Tool name="Tabulka dole"><GridPlaceIcon arrow="down" /></Tool>
          <Tool name="Tabulka"><GridPlaceIcon /></Tool>
          <Tool name="Tabulka nahoře"><GridPlaceIcon arrow="up" /></Tool>
          <Tool name="Nápověda"><HelpIcon /></Tool>
          <ToolDrop name="Nápověda nabídka" />
        </div>
      </div>
      <main className="flex flex-1 gap-[3px] pr-px pl-px">
        <div className="flex min-w-0 flex-1 flex-col">
          <section className="flex flex-1 flex-col border border-[#86aae8]">
            <h2 className="mt-px h-4 bg-linear-to-r from-[#cf6f58] to-[#d1e1f9] pl-[5px] font-['Liberation_Sans',sans-serif] text-[12px] leading-4 font-bold">Vydané faktury</h2>
            <div className="flex flex-1 pt-[5px] pb-[9px] pl-[5px]">
              <Faktura />
              <Odberatel />
            </div>
          </section>
          <Detail />
        </div>
        <aside className="flex w-[114px] shrink-0 flex-col border border-[#86aae8] bg-linear-to-r from-[#e2ecfe] to-[#84a9e6]">
          <h2 className="h-[17px] border-b border-[#4b70ad] bg-linear-to-b from-[#dce8fd] to-[#a4c2f2] text-center text-[12px] leading-4">Agendy</h2>
          <button className="mt-[6px] flex flex-col items-center gap-[3px]">
            <svg width="36" height="34" viewBox="0 0 36 34" aria-hidden="true">
              <defs>
                <linearGradient id="tile" x1="0" y1="0" x2="0" y2="1">
                  <stop offset="0" stopColor="#d8f0d0" />
                  <stop offset=".45" stopColor="#4fbf4a" />
                  <stop offset="1" stopColor="#8fe07a" />
                </linearGradient>
              </defs>
              <rect x=".7" y=".7" width="34.600" height="32.600" rx="3" fill="url(#tile)" stroke="#9a9a8a" />
              <path d="M3 3l17-1 6 23-20 4z" fill="#fafafa" stroke="#c8c8c8" strokeWidth=".6" />
              <path d="M6 7h8M6 10h4M7 20h8M8 23h8M8 26h5" stroke="#bbb" />
              <path d="M8 9l15-3 2 9-15 3z" fill="none" stroke="#d85a50" />
              <path d="M11 15v-4h2v2h-2M15 15l1-4 2 3M20 14V9l3 3" fill="none" stroke="#d85a50" strokeWidth="1.200" />
              <path d="M13 21l8-5 12 6v3l-10 6-10-6z" fill="#6d2d14" />
              <path d="M13 21l8-5 12 6-10 5z" fill="#a2532c" />
              <path d="M19 20l4-6 7 4-4 6z" fill="#8a4020" />
              <circle cx="27" cy="14" r="4.500" fill="#8f4a2a" />
              <circle cx="26" cy="12.500" r="2" fill="#b87450" />
            </svg>
            <span className="leading-4">Vydané faktury</span>
          </button>
        </aside>
      </main>
      <footer className="mt-px flex h-5 items-center border-t border-[#e6e6e6] bg-[#f0f0f0] pt-px pl-[2px]">
        <span>OK</span>
        <span className="flex-1 text-right">Novák s.r.o.</span>
        <div className="w-[92px] shrink-0" />
        <StatusCell w="w-[39px] pl-1">2018</StatusCell>
        <StatusCell w="w-8" />
        <StatusCell w="w-7 pl-1">@</StatusCell>
        <StatusCell w="w-6" />
        <StatusCell w="w-6 justify-center">
          <svg width="14" height="13" viewBox="0 0 14 13" aria-hidden="true">
            <path d="M1 7l3-1 1 2 6-7h2L6 12H3z" fill="#18d8e0" stroke="#000" />
            <path d="M2 10l2 2h2l7-10" fill="none" stroke="#0a0a60" />
          </svg>
        </StatusCell>
        <StatusCell w="w-6" />
        <StatusCell w="w-[100px]" />
        <StatusCell w="w-8" />
        <StatusCell w="w-6" />
        <StatusCell w="w-6" />
        <StatusCell w="w-[20px] items-end justify-end pb-[2px]">
          <svg width="9" height="9" viewBox="0 0 9 9" shapeRendering="crispEdges" aria-hidden="true">
            <path d="M6 0h2v2H6zM3 3h2v2H3zM6 3h2v2H6zM0 6h2v2H0zM3 6h2v2H3zM6 6h2v2H6z" fill="#b8b8b8" />
          </svg>
        </StatusCell>
      </footer>
    </div>
  );
}
